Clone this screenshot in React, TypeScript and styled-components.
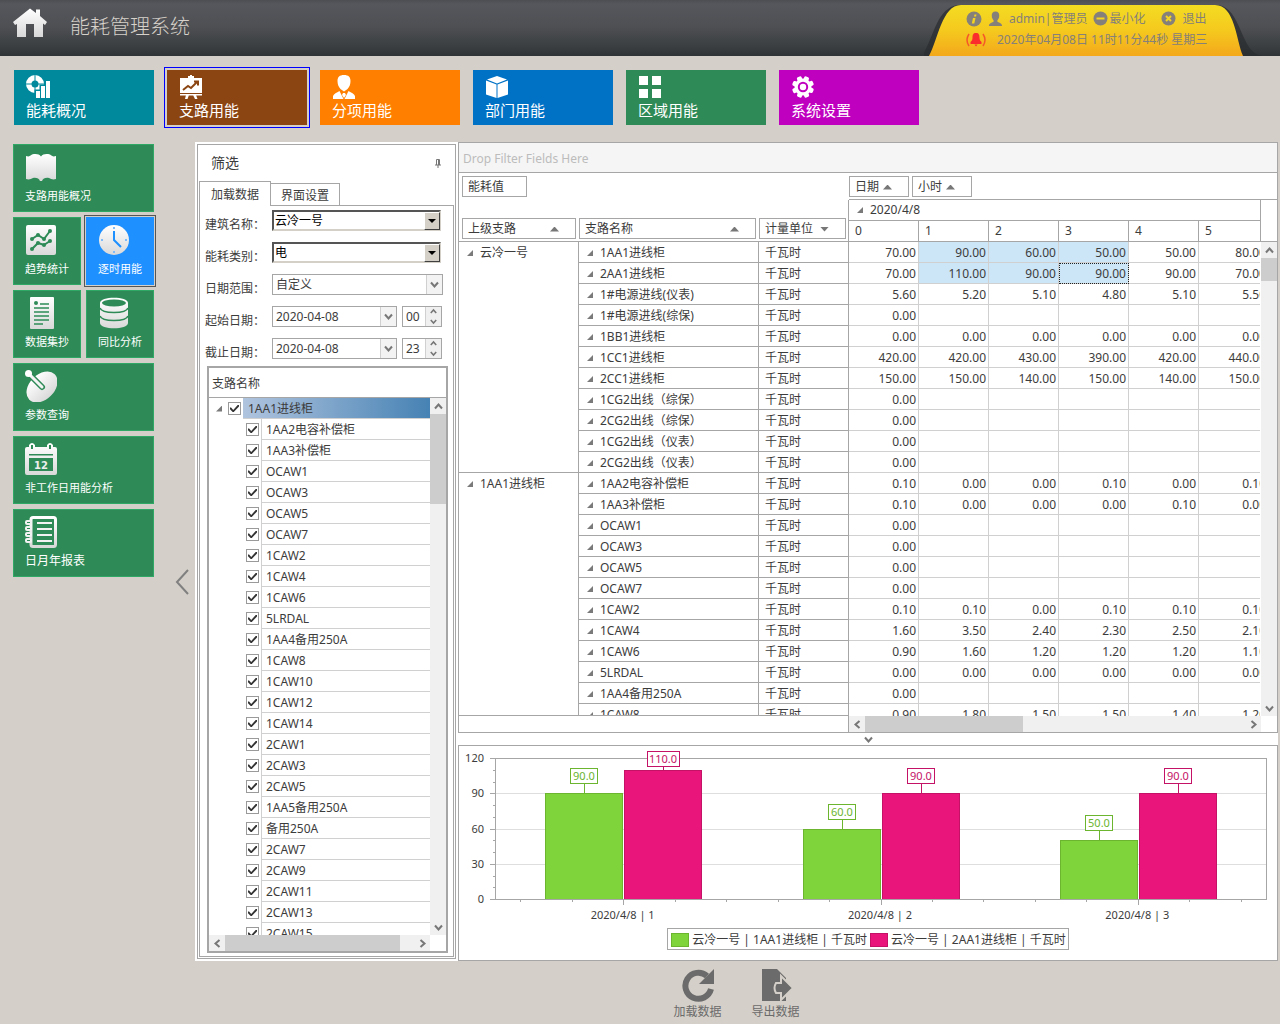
import React from 'react';
import styled, { createGlobalStyle, css } from 'styled-components';

const LINE = '#a6a6a6';
const SOFT = '#d0d0d0';
const INK = '#3c3c3c';
const GREY = '#6b6b6b';

const GlobalStyle = createGlobalStyle`
  *, *::before, *::after { box-sizing: border-box; }
  body {
    margin: 0;
    background: #d4cfc8;
    color: ${INK};
    font: 12px/20px "Noto Sans", "Noto Sans CJK SC", sans-serif;
  }
  button, input, select { font: inherit; color: inherit; margin: 0; padding: 0; }
  button { border: 0; background: none; cursor: pointer; }
  ul { list-style: none; margin: 0; padding: 0; }
`;

/* ---------- frame ---------- */

const Page = styled.div`
  display: flex;
  flex-direction: column;
  height: 100vh;
  min-height: 720px;
`;

const Header = styled.header`
  display: flex;
  justify-content: space-between;
  flex: none;
  height: 56px;
  padding: 0 26px 0 12px;
  background: linear-gradient(#4d4e52 0, #56575c 4px, #4f5054 26px, #3b3f41 46px, #2f3335 56px);
`;

const Brand = styled.div`
  display: flex;
  align-items: flex-start;
  gap: 22px;
  padding-top: 7px;
`;

const Title = styled.h1`
  margin: 5px 0 0;
  font-size: 20px;
  line-height: 30px;
  font-weight: 300;
  color: #d6d1ca;
`;

const UserPanel = styled.div`
  position: relative;
  width: 330px;
  padding: 8px 0 0 42px;
  color: #85807a;
`;

const PanelShape = styled.svg`
  position: absolute;
  left: 0;
  top: 0;
`;

const UserLine = styled.div<{ $gap: number }>`
  position: relative;
  display: flex;
  align-items: center;
  gap: ${(p) => p.$gap}px;
  height: 21px;
  white-space: nowrap;
`;

const UserAction = styled.button`
  display: flex;
  align-items: center;
  gap: 1px;
`;

const ExitAction = styled(UserAction)`
  gap: 6px;
  margin-left: 10px;
`;

/* ---------- top navigation ---------- */

const Nav = styled.nav`
  display: flex;
  flex: none;
  gap: 13px;
  padding: 14px 14px 17px;
`;

const NavTile = styled.button<{ $color: string; $active?: boolean }>`
  display: flex;
  flex-direction: column;
  align-items: flex-start;
  width: 140px;
  height: 55px;
  padding: 5px 12px 0;
  background: ${(p) => p.$color};
  color: #fff;
  font-size: 15px;
  line-height: 20px;
  ${(p) => p.$active && css`outline: 1px solid #0000ff; outline-offset: 2px;`}
  svg { display: block; }
`;

/* ---------- side navigation ---------- */

const Main = styled.main`
  display: flex;
  flex: 1;
  min-height: 0;
  padding-right: 2px;
`;

const Side = styled.nav`
  display: grid;
  grid-template-columns: 68px 68px;
  grid-auto-rows: 68px;
  gap: 5px;
  flex: none;
  align-content: start;
  padding: 2px 0 0 13px;
`;

const SideTile = styled.button<{ $wide?: boolean; $active?: boolean; $large?: boolean }>`
  display: flex;
  flex-direction: column;
  align-items: flex-start;
  padding: 6px 11px 0;
  border: 1px solid #2fa866;
  background: #2e8b57;
  color: #fff;
  font-size: ${(p) => (p.$large ? 12 : 11)}px;
  line-height: 20px;
  white-space: nowrap;
  ${(p) => p.$wide && css`grid-column: span 2;`}
  ${(p) => p.$active && css`
    border-color: #1e90ff;
    background: #1e90ff;
    outline: 1px solid #555;
    outline-offset: 1px;
  `}
  svg { display: block; margin-bottom: 3px; }
`;

const Collapse = styled.button`
  display: flex;
  align-items: center;
  justify-content: flex-end;
  flex: none;
  width: 41px;
  padding: 60px 6px 0 0;
`;

const Workspace = styled.div`
  display: flex;
  flex: 1;
  min-width: 0;
  background: #fff;
`;

/* ---------- filter panel ---------- */

const FilterPanel = styled.aside`
  display: flex;
  flex-direction: column;
  flex: none;
  width: 259px;
  margin: 2px;
  border: 1px solid ${LINE};
  padding: 0 1px 1px;
`;

const PanelTitle = styled.div`
  display: flex;
  align-items: center;
  justify-content: space-between;
  height: 36px;
  padding: 0 12px;
  font-size: 14px;
`;

const Tabs = styled.div`
  display: flex;
  align-items: flex-end;
  height: 24px;
`;

const Tab = styled.button<{ $active?: boolean }>`
  position: relative;
  width: ${(p) => (p.$active ? 72 : 69)}px;
  height: ${(p) => (p.$active ? 25 : 22)}px;
  padding-top: 2px;
  border: 1px solid ${LINE};
  border-bottom: 0;
  background: #fff;
  ${(p) => (p.$active ? css`margin-bottom: -1px; z-index: 1;` : css`border-left: 0;`)}
`;

const TabBody = styled.div`
  display: flex;
  flex-direction: column;
  flex: 1;
  min-height: 0;
  border: 1px solid ${LINE};
  padding: 0 5px 3px 7px;
`;

const FormRow = styled.div`
  display: flex;
  gap: 5px;
  flex: none;
  height: 32px;
  padding-top: 4px;
`;

const FieldLabel = styled.label`
  width: 62px;
  margin-left: -2px;
  padding-top: 5px;
  white-space: nowrap;
`;

const SelectBox = styled.div<{ $classic?: boolean }>`
  position: relative;
  flex: 1;
  height: 21px;
  margin-right: ${(p) => (p.$classic ? 7 : 5)}px;
  select {
    appearance: none;
    display: block;
    width: 100%;
    height: 100%;
    padding: 0 20px 0 3px;
    border-radius: 0;
    background: #fff;
    line-height: 16px;
    ${(p) => (p.$classic
    ? css`border: 2px solid; border-color: #555 #d4d0c8 #d4d0c8 #555; padding-left: 1px; color: #000;`
    : css`border: 1px solid ${LINE};`)}
  }
`;

const DropMark = styled.span<{ $classic?: boolean }>`
  position: absolute;
  right: 1px;
  top: ${(p) => (p.$classic ? 2 : 1)}px;
  bottom: 1px;
  display: flex;
  align-items: center;
  justify-content: center;
  width: 16px;
  pointer-events: none;
  ${(p) => (p.$classic
    ? css`background: #d4d0c8; border: 1px solid; border-color: #fff #404040 #404040 #fff;`
    : css`background: #f3f3f3; border-left: 1px solid ${SOFT};`)}
`;

const Field = styled.div<{ $width: number }>`
  display: flex;
  width: ${(p) => p.$width}px;
  height: 21px;
  border: 1px solid ${LINE};
  background: #fff;
  input {
    flex: 1;
    min-width: 0;
    padding-left: 3px;
    border: 0;
    background: none;
    outline: 0;
  }
`;

const FieldButton = styled.button`
  display: flex;
  align-items: center;
  justify-content: center;
  width: 16px;
  background: #f3f3f3;
  border-left: 1px solid ${SOFT};
`;

const Spin = styled.div`
  display: flex;
  flex-direction: column;
  width: 16px;
  background: #f0f0f0;
  border-left: 1px solid ${SOFT};
  button { display: flex; flex: 1; align-items: center; justify-content: center; }
`;

/* ---------- tree ---------- */

const Tree = styled.div`
  display: flex;
  flex-direction: column;
  flex: 1;
  min-height: 0;
  width: 241px;
  border: 2px solid ${LINE};
`;

const TreeHead = styled.div`
  flex: none;
  height: 30px;
  padding: 6px 3px 0;
  border-bottom: 1px solid ${LINE};
`;

const TreeView = styled.div`
  display: flex;
  flex: 1;
  min-height: 0;
`;

const TreeList = styled.ul`
  flex: 1;
  overflow: hidden;
`;

const TreeRow = styled.li<{ $root?: boolean }>`
  display: flex;
  align-items: center;
  height: 21px;
  padding-left: ${(p) => (p.$root ? 7 : 37)}px;
  label {
    flex: 1;
    height: 21px;
    margin-left: 2px;
    padding-left: 4px;
    border-left: 1px solid ${SOFT};
    border-bottom: 1px solid ${SOFT};
    line-height: 22px;
    white-space: nowrap;
    ${(p) => p.$root && css`
      padding-left: 5px;
      border-left: 0;
      background: linear-gradient(90deg, #b0c4de, #4682b4);
    `}
  }
`;

const Expander = styled.button`
  display: block;
  flex: none;
  width: 6px;
  height: 6px;
  background: #7a7a7a;
  clip-path: polygon(100% 0, 100% 100%, 0 100%);
`;

const TreeExpander = styled(Expander)`
  margin-right: 6px;
`;

const Check = styled.input`
  appearance: none;
  display: flex;
  align-items: center;
  justify-content: center;
  flex: none;
  width: 13px;
  height: 13px;
  border: 1px solid #9a9a9a;
  background: #fff;
  &:checked::before {
    content: '';
    width: 9px;
    height: 8px;
    background: #333;
    clip-path: polygon(0 38%, 12% 38%, 36% 68%, 88% 4%, 100% 4%, 100% 24%, 42% 94%, 30% 94%, 0 60%);
  }
`;

/* ---------- scroll bars ---------- */

const ScrollTrack = styled.div<{ $row?: boolean }>`
  display: flex;
  flex-direction: ${(p) => (p.$row ? 'row' : 'column')};
  flex: ${(p) => (p.$row ? '1' : 'none')};
  ${(p) => (p.$row ? css`height: 16px;` : css`width: 16px;`)}
  background: #f0f0f0;
`;

const ScrollButton = styled.button`
  display: flex;
  align-items: center;
  justify-content: center;
  flex: none;
  width: 16px;
  height: 16px;
`;

const ThumbArea = styled.div<{ $row?: boolean }>`
  display: flex;
  flex-direction: ${(p) => (p.$row ? 'row' : 'column')};
  flex: 1;
`;

const Thumb = styled.div<{ $size: number }>`
  flex: 0 0 ${(p) => p.$size}px;
  background: #cdcdcd;
`;

const ScrollFoot = styled.div`
  display: flex;
  flex: none;
  height: 16px;
  padding-right: 16px;
`;

/* ---------- pivot grid ---------- */

const Content = styled.section`
  display: flex;
  flex-direction: column;
  flex: 1;
  min-width: 0;
`;

const Pivot = styled.div`
  display: flex;
  flex-direction: column;
  flex: 1;
  min-height: 0;
  border: 1px solid ${LINE};
`;

const DropZone = styled.div`
  flex: none;
  height: 30px;
  padding: 6px 4px 0;
  border-bottom: 1px solid ${LINE};
  background: #f5f5f5;
  color: #bcbcbc;
`;

const PivotBody = styled.div`
  display: flex;
  flex: 1;
  min-height: 0;
`;

const RowArea = styled.div`
  display: flex;
  flex-direction: column;
  flex: none;
  width: 390px;
`;

const RowFields = styled.div`
  display: flex;
  flex-direction: column;
  justify-content: space-between;
  flex: none;
  height: 69px;
  padding: 3px 0 0 3px;
  border-bottom: 1px solid ${LINE};
`;

const Chips = styled.div`
  display: flex;
  gap: 3px;
`;

const HeaderChips = styled(Chips)`
  align-items: flex-end;
  height: 41px;
  padding-bottom: 2px;
  border-right: 1px solid ${LINE};
`;

const Chip = styled.button<{ $width: number; $spread?: boolean }>`
  display: flex;
  align-items: center;
  justify-content: ${(p) => (p.$spread ? 'space-between' : 'flex-start')};
  gap: 4px;
  width: ${(p) => p.$width}px;
  height: 21px;
  padding: 1px ${(p) => (p.$spread ? 16 : 4)}px 0 5px;
  border: 1px solid ${LINE};
  background: #fff;
  white-space: nowrap;
`;

const SortMark = styled.span<{ $down?: boolean }>`
  width: 9px;
  height: 5px;
  background: #777;
  clip-path: ${(p) => (p.$down ? 'polygon(0 0, 100% 0, 50% 100%)' : 'polygon(50% 0, 100% 100%, 0 100%)')};
`;

const ClassicMark = styled(SortMark)`
  width: 8px;
  height: 4px;
  background: #000;
`;

const Clip = styled.div`
  flex: 1;
  min-width: 0;
  min-height: 0;
  overflow: hidden;
`;

const RowFoot = styled.div`
  flex: none;
  height: 17px;
  border-top: 1px solid ${LINE};
  border-right: 1px solid ${LINE};
`;

const RowTable = styled.table`
  width: 390px;
  table-layout: fixed;
  border-collapse: separate;
  border-spacing: 0;
  th, td {
    height: 21px;
    padding: 2px 6px 0;
    border-right: 1px solid ${LINE};
    border-bottom: 1px solid ${LINE};
    font-weight: 400;
    text-align: left;
    vertical-align: top;
    line-height: 18px;
    white-space: nowrap;
  }
`;

const Member = styled.span`
  display: flex;
  align-items: center;
  gap: 7px;
  padding-left: 2px;
`;

const ColArea = styled.div`
  display: flex;
  flex-direction: column;
  flex: 1;
  min-width: 0;
`;

const ColFields = styled.div`
  flex: none;
  height: 27px;
  padding-top: 3px;
  border-bottom: 1px solid ${LINE};
`;

const DataWrap = styled.div`
  display: flex;
  flex: 1;
  min-height: 0;
`;

const ScrollColumn = styled.div`
  display: flex;
  flex-direction: column;
  flex: none;
  width: 17px;
`;

const ScrollHead = styled.div`
  flex: none;
  height: 42px;
  border-left: 1px solid ${LINE};
  border-bottom: 1px solid ${LINE};
`;

const ScrollFill = styled.div`
  display: flex;
  flex: 1;
  min-height: 0;
  justify-content: flex-end;
`;

const DataTable = styled.table`
  width: 560px;
  table-layout: fixed;
  border-collapse: separate;
  border-spacing: 0;
  th {
    height: 21px;
    padding: 0 6px;
    border-right: 1px solid ${LINE};
    border-bottom: 1px solid ${LINE};
    font-weight: 400;
    text-align: left;
    line-height: 20px;
  }
`;

const Cell = styled.td<{ $selected?: boolean; $focused?: boolean }>`
  height: 21px;
  padding: 2px 2px 0 0;
  border-right: 1px solid ${SOFT};
  border-bottom: 1px solid ${SOFT};
  text-align: right;
  line-height: 18px;
  ${(p) => p.$selected && css`background: #cde6f7;`}
  ${(p) => p.$focused && css`outline: 1px dotted #222; outline-offset: -1px;`}
`;

const Splitter = styled.button`
  display: flex;
  align-items: center;
  justify-content: center;
  flex: none;
  height: 12px;
`;

/* ---------- chart ---------- */

const ChartPanel = styled.figure`
  display: flex;
  flex-direction: column;
  align-items: center;
  flex: none;
  height: 216px;
  margin: 0;
  border: 1px solid ${LINE};
`;

const ChartSvg = styled.svg`
  display: block;
  width: 100%;
  height: 182px;
  font-size: 11px;
`;

const Legend = styled.figcaption`
  display: flex;
  align-items: center;
  gap: 3px;
  height: 22px;
  padding: 1px 2px 0 3px;
  border: 1px solid ${LINE};
  white-space: nowrap;
`;

const Swatch = styled.span<{ $fill: string; $edge: string }>`
  width: 18px;
  height: 14px;
  border: 1px solid ${(p) => p.$edge};
  background: ${(p) => p.$fill};
`;

/* ---------- footer ---------- */

const Footer = styled.footer`
  display: flex;
  justify-content: center;
  flex: none;
  gap: 30px;
  height: 63px;
  padding: 7px 2px 0 195px;
`;

const FooterButton = styled.button`
  display: flex;
  flex-direction: column;
  align-items: center;
  width: 48px;
  color: ${GREY};
  white-space: nowrap;
  svg { display: block; }
`;

/* ---------- icons ---------- */

type Direction = 'up' | 'down' | 'left' | 'right';
const chevrons: Record<Direction, string> = {
  up: 'M1 6.500 4.500 2.500 8 6.500',
  down: 'M1 2.500 4.500 6.500 8 2.500',
  left: 'M6.500 1 2.500 4.500 6.500 8',
  right: 'M2.500 1 6.500 4.500 2.500 8',
};

const Chevron = ({ to, size = 9 }: { to: Direction; size?: number }) => (
  <svg width={size} height={size} viewBox="0 0 9 9" fill="none" stroke="#777" strokeWidth="2">
    <path d={chevrons[to]} />
  </svg>
);

const HomeIcon = () => (
  <svg width="36" height="32" viewBox="0 0 36 32">
    <defs>
      <linearGradient id="home" x1="0" y1="0" x2="0" y2="1">
        <stop offset="0" stopColor="#fff" />
        <stop offset="1" stopColor="#d8d8d8" />
      </linearGradient>
    </defs>
    <path fill="url(#home)" d="M18 1.500 1 15l2 3 2-1v13h9V17h8v13h9V16.500l2 1.500 2-3-7-6V2.500h-4V6l-6-4.500Z" />
  </svg>
);

const overviewIcon = (
  <>
    <path fill="#fff" fillRule="evenodd" d="M9 0a9 9 0 1 0 0 18 9 9 0 0 0 0-18Zm0 5.500a3.500 3.500 0 1 1 0 7 3.500 3.500 0 0 1 0-7Z" />
    <path d="M9 0v6M9 12v6M0 9h6M12 9h6" stroke="#00889c" />
    <path fill="#fff" stroke="#00889c" strokeWidth="3" paintOrder="stroke" d="M10 16h4v7h-4ZM15 11h4v12h-4ZM20 6h4v17h-4Z" />
  </>
);

const boardIcon = (
  <>
    <path fill="#fff" d="M9 1h2V0h2v1h2v2h8v15H1V3h8Z" />
    <path fill="#fff" d="M1 19h22v1.500H1ZM7 20h3l-1.500 4H6ZM14 20h3l1.500 4H16Z" />
    <path d="m4 15 5-4 3 2 6-6M15 6.500h4v4" fill="none" stroke="#8b4513" strokeWidth="2" />
  </>
);

const personIcon = (
  <path fill="#fff" d="M12 0c4.500 0 6.500 2 6.500 6 0 3-1 6-3 8L12 16.500 8.500 14c-2-2-3-5-3-8 0-4 2-6 6.500-6ZM7.500 16l4 8H1v-3c1-2 3.500-3.500 6.500-5ZM16.500 16c3 1.500 5.500 3 6.500 5v3H12.500ZM11 18h2l1 2-2 3-2-3Z" />
);

const cubeIcon = (
  <path fill="#fff" d="m12 1 10 3.500L12 8.500 2 4.500ZM1 5.500l10.500 4V23L1 19.500ZM23 5.500l-10.500 4V23L23 19.500Z" />
);

const blocksIcon = (
  <path fill="#fff" d="M1 1h9v9H1ZM14 1h9v9h-9ZM1 14h9v9H1ZM14 14h9v9h-9Z" />
);

const gearIcon = (
  <>
    <g fill="#fff">
      {[22, 67, 112, 157].map((a) => (
        <rect key={a} x="9.500" y="1" width="5" height="22" rx="1.500" transform={`rotate(${a} 12 12)`} />
      ))}
      <circle cx="12" cy="12" r="8.500" />
    </g>
    <circle cx="12" cy="12" r="4.200" fill="none" stroke="#bf00bf" strokeWidth="2" />
  </>
);

const mapIcon = (
  <path fill="url(#tile)" d="M1 5c3 1 4 0 6-1.500 4-1 7-.5 9 2 2-2.500 5-3 9-2 2 1.500 3 2.500 6 1.500v23c-3 1-5 0-7-1-3-.5-6 0-7 3h-2c-1-3-4-3.500-7-3-2 1-4 2-7 1Z" />
);

const trendIcon = (
  <>
    <rect x="1" y="1" width="30" height="30" rx="2" fill="url(#tile)" />
    <g fill="none" stroke="#2e8b57" strokeWidth="2"><path d="m7 15 6-4 6 4 6-8M7 25l6-6 6 2 6-4" /></g>
    <g fill="#2e8b57">
      {[[7, 15], [13, 11], [19, 15], [25, 7], [7, 25], [13, 19], [19, 21], [25, 17]].map(([x, y]) => (
        <circle key={`${x}-${y}`} cx={x} cy={y} r="2" />
      ))}
    </g>
  </>
);

const clockIcon = (
  <>
    <circle cx="16" cy="16" r="15" fill="url(#tile)" />
    <path d="M16 7v9l7 7" fill="none" stroke="#1e90ff" strokeWidth="2" />
    <path d="M15 3h2v2h-2ZM15 27h2v2h-2ZM3 15h2v2H3ZM27 15h2v2h-2Z" fill="#7fbcf8" />
  </>
);

const sheetIcon = (
  <>
    <rect x="5" y="0" width="24" height="32" rx="1" fill="url(#tile)" />
    <circle cx="11" cy="6" r="2" fill="#2e8b57" />
    <path d="M15 7h9M9 11h15M9 15h15M9 19h15M9 23h15M9 27h9" stroke="#2e8b57" strokeWidth="1.500" />
  </>
);

const databaseIcon = (
  <>
    <path fill="url(#tile)" d="M2 6c0-7 28-7 28 0v20c0 7-28 7-28 0Z" />
    <ellipse cx="16" cy="6" rx="12" ry="3.500" fill="#2e8b57" />
    <path d="M2 11c2 6 26 6 28 0M2 19c2 6 26 6 28 0" fill="none" stroke="#2e8b57" strokeWidth="1.500" />
  </>
);

const dishIcon = (
  <>
    <ellipse cx="17" cy="17" rx="18" ry="12.500" transform="rotate(-45 17 17)" fill="url(#tile)" />
    <path d="m5 5 12 12" stroke="#2e8b57" strokeWidth="6" strokeLinecap="round" />
    <path d="m4 4 13 13" stroke="#f4f4f4" strokeWidth="3" strokeLinecap="round" />
    <circle cx="3.500" cy="3.500" r="3.500" fill="#fff" />
  </>
);

const calendarIcon = (
  <>
    <path fill="url(#tile)" fillRule="evenodd" d="M2 4h2V2q3-4 6 0v2h12V2q3-4 6 0v2h2q2 0 2 2v24q0 2-2 2H2q-2 0-2-2V6q0-2 2-2Zm4-2v4h2V2Zm18 0v4h2V2ZM4 11v1.500h24V11Zm0 4v13h24V15Z" />
    <text x="16" y="26" textAnchor="middle" fill="#eee" fontFamily="DejaVu Sans" fontSize="10" fontWeight="700">12</text>
  </>
);

const notebookIcon = (
  <>
    <rect x="6" y="1.500" width="24.500" height="29" rx="2" fill="none" stroke="url(#tile)" strokeWidth="3" />
    <path d="M12 7h15M12 13h15M12 19h15M12 25h15" stroke="#f2f2f2" strokeWidth="2" />
    <g fill="#2e8b57" stroke="#f2f2f2" strokeWidth="2">
      {[5, 11, 17, 23].map((y) => <rect key={y} x="1" y={y} width="5" height="3" rx="1" />)}
    </g>
  </>
);

/* ---------- data ---------- */

const navItems = [
  { label: '能耗概况', color: '#00889c', icon: overviewIcon },
  { label: '支路用能', color: '#8b4513', icon: boardIcon, active: true },
  { label: '分项用能', color: '#ff8000', icon: personIcon },
  { label: '部门用能', color: '#0072c6', icon: cubeIcon },
  { label: '区域用能', color: '#2e8b57', icon: blocksIcon },
  { label: '系统设置', color: '#bf00bf', icon: gearIcon },
];

const sideItems = [
  { label: '支路用能概况', icon: mapIcon, wide: true },
  { label: '趋势统计', icon: trendIcon },
  { label: '逐时用能', icon: clockIcon, active: true },
  { label: '数据集抄', icon: sheetIcon },
  { label: '同比分析', icon: databaseIcon },
  { label: '参数查询', icon: dishIcon, wide: true },
  { label: '非工作日用能分析', icon: calendarIcon, wide: true },
  { label: '日月年报表', icon: notebookIcon, wide: true, large: true },
];

const treeItems = [
  '1AA2电容补偿柜', '1AA3补偿柜', 'OCAW1', 'OCAW3', 'OCAW5', 'OCAW7', '1CAW2', '1CAW4', '1CAW6',
  '5LRDAL', '1AA4备用250A', '1CAW8', '1CAW10', '1CAW12', '1CAW14', '2CAW1', '2CAW3', '2CAW5',
  '1AA5备用250A', '备用250A', '2CAW7', '2CAW9', '2CAW11', '2CAW13', '2CAW15',
];

type Row = [string, number[]];
const zeros = [0, 0, 0, 0, 0, 0];
const groups: { name: string; rows: Row[] }[] = [
  {
    name: '云冷一号',
    rows: [
      ['1AA1进线柜', [70, 90, 60, 50, 50, 80]],
      ['2AA1进线柜', [70, 110, 90, 90, 90, 70]],
      ['1#电源进线(仪表)', [5.6, 5.2, 5.1, 4.8, 5.1, 5.5]],
      ['1#电源进线(综保)', [0]],
      ['1BB1进线柜', zeros],
      ['1CC1进线柜', [420, 420, 430, 390, 420, 440]],
      ['2CC1进线柜', [150, 150, 140, 150, 140, 150]],
      ['1CG2出线（综保）', [0]],
      ['2CG2出线（综保）', [0]],
      ['1CG2出线（仪表）', [0]],
      ['2CG2出线（仪表）', [0]],
    ],
  },
  {
    name: '1AA1进线柜',
    rows: [
      ['1AA2电容补偿柜', [0.1, 0, 0, 0.1, 0, 0.1]],
      ['1AA3补偿柜', [0.1, 0, 0, 0, 0.1, 0]],
      ['OCAW1', [0]],
      ['OCAW3', [0]],
      ['OCAW5', [0]],
      ['OCAW7', [0]],
      ['1CAW2', [0.1, 0.1, 0, 0.1, 0.1, 0.1]],
      ['1CAW4', [1.6, 3.5, 2.4, 2.3, 2.5, 2.1]],
      ['1CAW6', [0.9, 1.6, 1.2, 1.2, 1.2, 1.1]],
      ['5LRDAL', zeros],
      ['1AA4备用250A', [0]],
      ['1CAW8', [0.9, 1.8, 1.5, 1.5, 1.4, 1.2]],
    ],
  },
];
const allRows = groups.flatMap((g) => g.rows);
const hours = [0, 1, 2, 3, 4, 5, 6, 7];

const series = [
  { name: '云冷一号 | 1AA1进线柜 | 千瓦时', fill: '#7fd33b', edge: '#6bb52f', values: [90, 60, 50] },
  { name: '云冷一号 | 2AA1进线柜 | 千瓦时', fill: '#ea157a', edge: '#c41266', values: [110, 90, 90] },
];

/* ---------- parts ---------- */

function Scroll({ row, size }: { row?: boolean; size: number }) {
  return (
    <ScrollTrack $row={row}>
      <ScrollButton aria-label={row ? '向左' : '向上'}><Chevron to={row ? 'left' : 'up'} /></ScrollButton>
      <ThumbArea $row={row}><Thumb $size={size} /></ThumbArea>
      <ScrollButton aria-label={row ? '向右' : '向下'}><Chevron to={row ? 'right' : 'down'} /></ScrollButton>
    </ScrollTrack>
  );
}

function ClassicSelect({ id, label, value }: { id: string; label: string; value: string }) {
  return (
    <FormRow>
      <FieldLabel htmlFor={id}>{label}：</FieldLabel>
      <SelectBox $classic>
        <select id={id} defaultValue={value}><option>{value}</option></select>
        <DropMark $classic><ClassicMark $down /></DropMark>
      </SelectBox>
    </FormRow>
  );
}

function DateRow({ id, label, date, hour }: { id: string; label: string; date: string; hour: string }) {
  return (
    <FormRow>
      <FieldLabel htmlFor={id}>{label}：</FieldLabel>
      <Field $width={125}>
        <input id={id} defaultValue={date} />
        <FieldButton aria-label="选择日期"><Chevron to="down" /></FieldButton>
      </Field>
      <Field $width={40}>
        <input aria-label={`${label} 小时`} defaultValue={hour} />
        <Spin>
          <button aria-label="增加"><Chevron to="up" size={7} /></button>
          <button aria-label="减少"><Chevron to="down" size={7} /></button>
        </Spin>
      </Field>
    </FormRow>
  );
}

function Filters() {
  return (
    <FilterPanel>
      <PanelTitle>
        筛选
        <svg width="8" height="9" viewBox="0 0 8 9" fill="none" stroke="#777">
          <path d="M2.500 6V.5h3V6M1 6h6M4 6v3" />
          <path d="M5 1v5" strokeWidth="2" />
        </svg>
      </PanelTitle>
      <Tabs>
        <Tab $active>加载数据</Tab>
        <Tab>界面设置</Tab>
      </Tabs>
      <TabBody>
        <ClassicSelect id="building" label="建筑名称" value="云冷一号" />
        <ClassicSelect id="energy" label="能耗类别" value="电" />
        <FormRow>
          <FieldLabel htmlFor="range">日期范围：</FieldLabel>
          <SelectBox>
            <select id="range"><option>自定义</option></select>
            <DropMark><Chevron to="down" /></DropMark>
          </SelectBox>
        </FormRow>
        <DateRow id="start" label="起始日期" date="2020-04-08" hour="00" />
        <DateRow id="end" label="截止日期" date="2020-04-08" hour="23" />
        <Tree>
          <TreeHead>支路名称</TreeHead>
          <TreeView>
            <TreeList>
              <TreeRow $root>
                <TreeExpander aria-label="收起" />
                <Check type="checkbox" id="root-branch" defaultChecked />
                <label htmlFor="root-branch">1AA1进线柜</label>
              </TreeRow>
              {treeItems.map((name, i) => (
                <TreeRow key={name}>
                  <Check type="checkbox" id={`branch-${i}`} defaultChecked />
                  <label htmlFor={`branch-${i}`}>{name}</label>
                </TreeRow>
              ))}
            </TreeList>
            <Scroll size={90} />
          </TreeView>
          <ScrollFoot><Scroll row size={175} /></ScrollFoot>
        </Tree>
      </TabBody>
    </FilterPanel>
  );
}

function PivotGrid() {
  return (
    <Pivot>
      <DropZone>Drop Filter Fields Here</DropZone>
      <PivotBody>
        <RowArea>
          <RowFields>
            <Chips><Chip $width={65}>能耗值</Chip></Chips>
            <HeaderChips>
              <Chip $width={114} $spread>上级支路<SortMark /></Chip>
              <Chip $width={177} $spread>支路名称<SortMark /></Chip>
              <Chip $width={87} $spread>计量单位<SortMark $down /></Chip>
            </HeaderChips>
          </RowFields>
          <Clip>
            <RowTable>
              <colgroup>
                <col style={{ width: 120 }} />
                <col style={{ width: 180 }} />
                <col style={{ width: 90 }} />
              </colgroup>
              <tbody>
                {groups.map((g) => g.rows.map(([name], i) => (
                  <tr key={g.name + name}>
                    {i === 0 && (
                      <th rowSpan={g.rows.length} scope="rowgroup">
                        <Member><Expander aria-label="收起" />{g.name}</Member>
                      </th>
                    )}
                    <th scope="row"><Member><Expander aria-label="收起" />{name}</Member></th>
                    <td>千瓦时</td>
                  </tr>
                )))}
              </tbody>
            </RowTable>
          </Clip>
          <RowFoot />
        </RowArea>
        <ColArea>
          <ColFields>
            <Chips>
              <Chip $width={60}>日期<SortMark /></Chip>
              <Chip $width={60}>小时<SortMark /></Chip>
            </Chips>
          </ColFields>
          <DataWrap>
            <Clip>
              <DataTable>
                <thead>
                  <tr>
                    <th colSpan={hours.length}><Member><Expander aria-label="收起" />2020/4/8</Member></th>
                  </tr>
                  <tr>{hours.map((h) => <th key={h}>{h}</th>)}</tr>
                </thead>
                <tbody>
                  {allRows.map(([name, values], r) => (
                    <tr key={name + r}>
                      {hours.map((h) => (
                        <Cell key={h} $selected={r < 2 && h > 0 && h < 4} $focused={r === 1 && h === 3}>
                          {values[h] === undefined ? '' : values[h].toFixed(2)}
                        </Cell>
                      ))}
                    </tr>
                  ))}
                </tbody>
              </DataTable>
            </Clip>
            <ScrollColumn>
              <ScrollHead />
              <ScrollFill><Scroll size={23} /></ScrollFill>
            </ScrollColumn>
          </DataWrap>
          <ScrollFoot><Scroll row size={158} /></ScrollFoot>
        </ColArea>
      </PivotBody>
    </Pivot>
  );
}

function Chart() {
  const left = 36;
  const right = 808;
  const base = 153;
  const top = 12;
  const yOf = (v: number) => Math.round(base - (v * (base - top)) / 120);
  const slot = (right - left) / 3;
  const step = (right - left) / 15;
  return (
    <ChartPanel>
      <ChartSvg viewBox="0 0 818 182" role="img" aria-label="逐时用能">
        <g shapeRendering="crispEdges">
          {[30, 60, 90].map((v) => <rect key={v} x={left} y={yOf(v)} width={right - left} height="1" fill="#dedede" />)}
          <g fill={LINE}>
            {Array.from({ length: 13 }, (_, i) => {
              const major = i % 3 === 0;
              return <rect key={i} x={left - (major ? 5 : 2)} y={yOf(i * 10)} width={major ? 5 : 2} height="1" />;
            })}
            {Array.from({ length: 15 }, (_, i) => (
              <rect key={i} x={Math.floor(left + step * (i + 0.5))} y={base} width="1" height={i % 5 === 2 ? 6 : 3} />
            ))}
            <rect x={left} y={top} width={right - left} height="1" />
            <rect x={left} y={top} width="1" height={base - top} />
            <rect x={right - 1} y={top} width="1" height={base - top} />
          </g>
          {series.map((s, n) => s.values.map((v, i) => {
            const mid = Math.floor(left + slot * (i + 0.5));
            const x = n === 0 ? mid - 78 : mid + 1;
            const y = yOf(v);
            const w = v >= 100 ? 33 : 28;
            return (
              <g key={`${s.name}${v}${i}`}>
                <rect x={x + 0.5} y={y + 0.5} width="77" height={base - y} fill={s.fill} stroke={s.edge} />
                <rect x={x + 39} y={y - 11} width="1" height="11" fill={s.edge} />
                <rect x={Math.round(x + 39 - w / 2) + 0.5} y={y - (v >= 100 ? 19 : 25) + 0.5} width={w - 1} height="15" fill="#fff" stroke={s.edge} />
                <text x={x + 39} y={y - (v >= 100 ? 7 : 13)} textAnchor="middle" fill={s.edge}>{v.toFixed(1)}</text>
              </g>
            );
          }))}
          <rect x={left} y={base} width={right - left} height="1" fill={LINE} />
        </g>
        <g fill={INK}>
          {[0, 30, 60, 90, 120].map((v) => <text key={v} x="25" y={yOf(v) + 4} textAnchor="end">{v}</text>)}
          {[1, 2, 3].map((h, i) => (
            <text key={h} x={left + slot * (i + 0.5) - 1} y="173" textAnchor="middle">{`2020/4/8 | ${h}`}</text>
          ))}
        </g>
      </ChartSvg>
      <Legend>
        {series.map((s) => (
          <React.Fragment key={s.name}>
            <Swatch $fill={s.fill} $edge={s.edge} />
            <span>{s.name}</span>
          </React.Fragment>
        ))}
      </Legend>
    </ChartPanel>
  );
}

export default function App() {
  return (
    <Page>
      <GlobalStyle />
      <svg width="0" height="0" style={{ position: 'absolute' }} aria-hidden="true">
        <linearGradient id="tile" x1="0" y1="0" x2="0" y2="1">
          <stop offset="0" stopColor="#fff" />
          <stop offset="1" stopColor="#d9d9d9" />
        </linearGradient>
      </svg>
      <Header>
        <Brand>
          <HomeIcon />
          <Title>能耗管理系统</Title>
        </Brand>
        <UserPanel>
          <PanelShape width="340" height="56" viewBox="0 0 340 56">
            <defs>
              <linearGradient id="gold" x1="0" y1="0" x2="0" y2="1">
                <stop offset="0" stopColor="#f3dc22" />
                <stop offset="0.5" stopColor="#f5c91e" />
                <stop offset="1" stopColor="#f3a81b" />
              </linearGradient>
            </defs>
            <path fill="#2b2e30" opacity=".75" d="M-2 56C10 38 12 8 34 5h260c24 3 22 48 44 51Z" />
            <path fill="url(#gold)" d="M5 56C14 40 18 5 37 5h254c20 0 21 35 28 51Z" />
          </PanelShape>
          <UserLine $gap={6}>
            <svg width="16" height="16" viewBox="0 0 16 16">
              <circle cx="8" cy="8" r="7.500" fill="#85807a" />
              <path d="M8.500 3.500h2l-.5 2H8ZM7 7h2.500l-1.200 5.500H5.800Z" fill="#f5d321" />
            </svg>
            <svg width="15" height="16" viewBox="0 0 16 16">
              <path fill="#85807a" d="M8 0c3 0 4 2 4 4.500S10.500 9 10 9.500V11c2 1 5 1.500 5 4.500H1C1 12.500 4 12 6 11V9.500C5.500 9 4 7 4 4.500S5 0 8 0Z" />
            </svg>
            <span>admin|管理员</span>
            <UserAction>
              <svg width="15" height="15" viewBox="0 0 15 15">
                <circle cx="7.500" cy="7.500" r="7" fill="#85807a" />
                <path d="M3.500 6.500h8v2h-8Z" fill="#f5d321" />
              </svg>
              最小化
            </UserAction>
            <ExitAction>
              <svg width="15" height="15" viewBox="0 0 15 15">
                <circle cx="7.500" cy="7.500" r="7" fill="#85807a" />
                <path d="m5 5 5 5M10 5l-5 5" stroke="#f5d321" strokeWidth="2" />
              </svg>
              退出
            </ExitAction>
          </UserLine>
          <UserLine $gap={11}>
            <svg width="20" height="16" viewBox="0 0 20 16">
              <path d="M10 1c3 0 3.500 2 3.500 5 0 2 1 3 2 4v2h-11v-2c1-1 2-2 2-4 0-3 .5-5 3.500-5ZM8.500 12.500h3l-1.500 2Z" fill="#fb2c2c" />
              <path d="M3 2Q-1 8 3 14M17 2q4 6 0 12" fill="none" stroke="#f5572a" strokeWidth="1.500" />
            </svg>
            <span>2020年04月08日 11时11分44秒 星期三</span>
          </UserLine>
        </UserPanel>
      </Header>
      <Nav>
        {navItems.map((n) => (
          <NavTile key={n.label} $color={n.color} $active={n.active}>
            <svg width="25" height="25" viewBox="0 0 25 25">{n.icon}</svg>
            {n.label}
          </NavTile>
        ))}
      </Nav>
      <Main>
        <Side>
          {sideItems.map((s) => (
            <SideTile key={s.label} $wide={s.wide} $active={s.active} $large={s.large}>
              <svg width="32" height="32" viewBox="0 0 32 32">{s.icon}</svg>
              {s.label}
            </SideTile>
          ))}
        </Side>
        <Collapse aria-label="收起菜单">
          <svg width="14" height="26" viewBox="0 0 14 26" fill="none" stroke="#808080" strokeWidth="2">
            <path d="M13 1 2 13l11 12" />
          </svg>
        </Collapse>
        <Workspace>
          <Filters />
          <Content>
            <PivotGrid />
            <Splitter aria-label="收起图表"><Chevron to="down" /></Splitter>
            <Chart />
          </Content>
        </Workspace>
      </Main>
      <Footer>
        <FooterButton>
          <svg width="34" height="34" viewBox="0 0 34 34">
            <path d="M26 8A13 13 0 1 0 30 21" fill="none" stroke={GREY} strokeWidth="6" />
            <path d="M33 1v15H18Z" fill={GREY} />
          </svg>
          加载数据
        </FooterButton>
        <FooterButton>
          <svg width="34" height="34" viewBox="0 0 34 34">
            <path d="M3 1h15l9 9v23H3Z" fill={GREY} />
            <path d="M17 15h5V8l12 12-12 12v-7h-5q-3-5 0-10Z" fill={GREY} stroke="#d4cfc8" strokeWidth="2" />
          </svg>
          导出数据
        </FooterButton>
      </Footer>
    </Page>
  );
}
